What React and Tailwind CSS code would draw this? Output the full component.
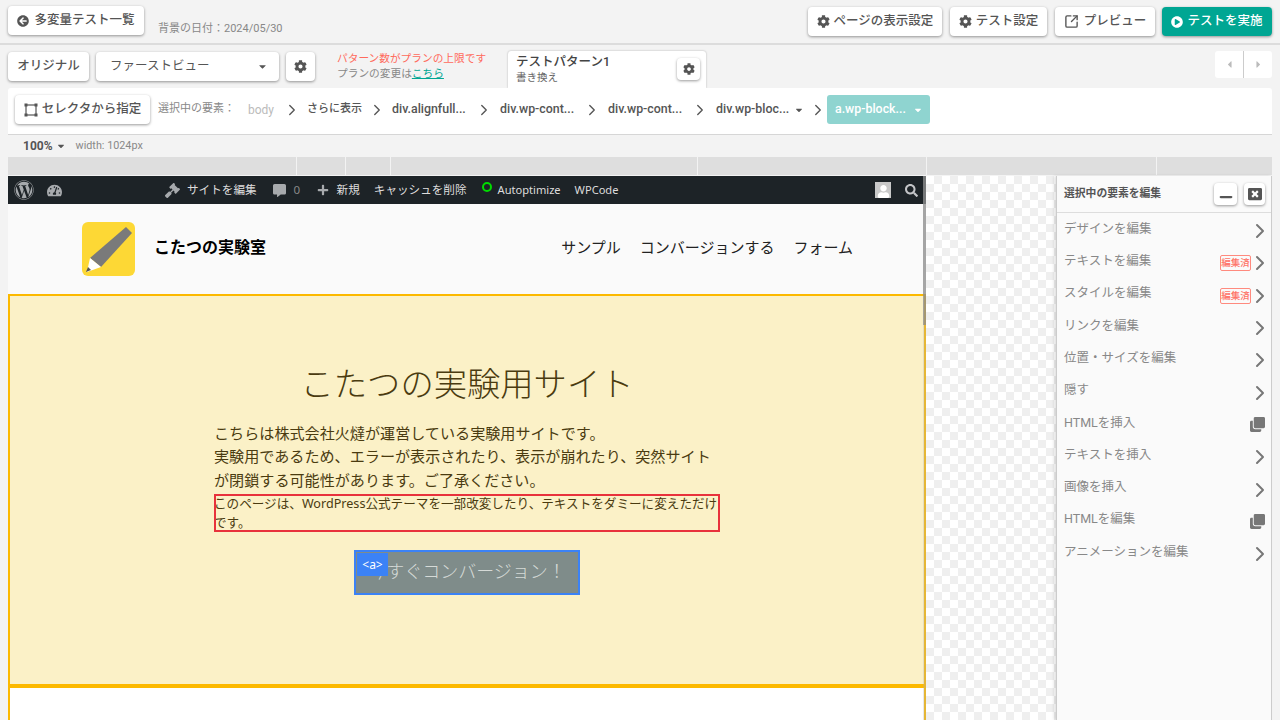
import React from 'react';
import { ChevronRight, Minus, SquareArrowOutUpRight } from 'lucide-react';
import {
  FaArrowCircleLeft,
  FaCaretDown,
  FaCaretLeft,
  FaCaretRight,
  FaClone,
  FaCog,
  FaCommentAlt,
  FaGavel,
  FaPlayCircle,
  FaPlus,
  FaSearch,
  FaTachometerAlt,
  FaUser,
  FaWindowClose,
  FaWordpress,
} from 'react-icons/fa';

const btn = 'flex items-center rounded-[4px] bg-white text-[#555] font-medium shadow-[0_1px_3px_rgba(0,0,0,0.4)]';

const crumbs = [
  { label: 'さらに表示', w: 'w-[54px] text-[11px]', slot: 'w-[31px]' },
  { label: 'div.alignfull...', w: 'w-[75px]', slot: 'w-[33px]' },
  { label: 'div.wp-cont...', w: 'w-[75px]', slot: 'w-[33px]' },
  { label: 'div.wp-cont...', w: 'w-[75px]', slot: 'w-[33px]' },
];

const menu = [
  { label: 'デザインを編集' },
  { label: 'テキストを編集', edited: true },
  { label: 'スタイルを編集', edited: true },
  { label: 'リンクを編集' },
  { label: '位置・サイズを編集' },
  { label: '隠す' },
  { label: 'HTMLを挿入', copy: true },
  { label: 'テキストを挿入' },
  { label: '画像を挿入' },
  { label: 'HTMLを編集', copy: true },
  { label: 'アニメーションを編集' },
];

const Crumb = ({ w }) => (
  <span className={`${w} flex shrink-0 justify-center`}>
    <ChevronRight size={18} strokeWidth={1.8} className="text-[#555]" />
  </span>
);

function TopBar() {
  return (
    <header className="flex h-[45px] shrink-0 items-start justify-between border-b-2 border-[#dcdcdc] px-2 pt-[6px] text-[12.5px]">
      <div className="flex">
        <button className={`${btn} h-[29px] w-[136px] justify-center gap-[5px]`}>
          <FaArrowCircleLeft size={12} />
          多変量テスト一覧
        </button>
        <span className="ml-[14px] mt-[15px] text-[11px] text-[#888]">背景の日付：2024/05/30</span>
      </div>
      <div className="flex gap-2 pt-px">
        <button className={`${btn} h-[29px] w-[134px] justify-center gap-[4px]`}>
          <FaCog size={13} />
          ページの表示設定
        </button>
        <button className={`${btn} h-[29px] w-[97px] justify-center gap-[4px]`}>
          <FaCog size={13} />
          テスト設定
        </button>
        <button className={`${btn} h-[29px] w-[100px] justify-center gap-[5px]`}>
          <SquareArrowOutUpRight size={15} strokeWidth={2.2} />
          プレビュー
        </button>
        <button className="-ml-px flex h-[29px] w-[110px] items-center justify-center gap-[4px] rounded-[4px] bg-[#00a693] font-medium text-white shadow-[0_1px_3px_rgba(0,0,0,0.4)]">
          <FaPlayCircle size={12} />
          テストを実施
        </button>
      </div>
    </header>
  );
}

function PatternRow() {
  return (
    <div className="flex h-[43px] shrink-0 items-start px-2 pt-[6px] text-[12.5px]">
      <button className={`${btn} mt-px h-[29px] w-[81px] justify-center font-bold`}>オリジナル</button>
      <button className={`${btn} ml-[7px] mt-px h-[29px] w-[183px] justify-between pl-[14px] pr-[11px] font-normal`}>
        ファーストビュー
        <FaCaretDown size={11} />
      </button>
      <button className={`${btn} ml-[7px] mt-px h-[29px] w-[29px] justify-center`}>
        <FaCog size={13} />
      </button>
      <div className="ml-[22px] flex w-[170px] shrink-0 flex-col text-[10.7px] leading-[15px]">
        <span className="text-[#ff6a5c]">パターン数がプランの上限です</span>
        <span className="text-[#888]">
          プランの変更は<span className="text-[#00a693] underline">こちら</span>
        </span>
      </div>
      <div className="ml-px flex h-[37px] w-[198px] items-start justify-between rounded-t-[3px] bg-white pl-2 pr-[6px] shadow-[0_0_2px_rgba(0,0,0,0.3)]">
        <div className="flex flex-col">
          <span className="mt-[2px] text-[12.5px] font-medium leading-[17px] text-[#444]">テストパターン1</span>
          <span className="mt-px text-[10.5px] leading-[14px] text-[#666]">書き換え</span>
        </div>
        <button className={`${btn} mt-[7px] h-[22px] w-[23px] justify-center`}>
          <FaCog size={12} />
        </button>
      </div>
      <div className="ml-auto flex h-[27px] w-[57px] rounded-[3px] bg-white text-[#bbb]">
        <span className="flex flex-1 items-center justify-center border-r border-[#ccc]">
          <FaCaretLeft size={11} />
        </span>
        <span className="flex flex-1 items-center justify-center">
          <FaCaretRight size={11} />
        </span>
      </div>
    </div>
  );
}

function SelectorBar() {
  return (
    <div className="mx-2 flex h-[47px] shrink-0 items-start rounded-t-[3px] border-b border-[#d6d6d6] bg-white pl-[7px] pt-[7px]">
      <button className={`${btn} h-[29px] w-[135px] justify-center gap-[4px] text-[12.5px]`}>
        {/* selection frame with corner handles */}
        <svg width="14" height="14" viewBox="0 0 14 14" fill="none">
          <rect x="2" y="2" width="10" height="10" stroke="#555" strokeWidth="1.2" />
          <rect x="0.5" y="0.5" width="3" height="3" fill="#555" />
          <rect x="10.5" y="0.5" width="3" height="3" fill="#555" />
          <rect x="0.5" y="10.5" width="3" height="3" fill="#555" />
          <rect x="10.5" y="10.5" width="3" height="3" fill="#555" />
        </svg>
        セレクタから指定
      </button>
      <div className="flex h-[29px] items-center text-[12.4px] font-medium text-[#555]">
        <span className="ml-2 w-[90px] text-[11px] font-normal text-[#888]">選択中の要素：</span>
        <span className="w-[28px] text-[12px] font-normal text-[#bbb]">body</span>
        <Crumb w="w-[31px]" />
        {crumbs.map((c, i) => (
          <React.Fragment key={i}>
            <span className={`${c.w} whitespace-nowrap`}>{c.label}</span>
            <Crumb w={c.slot} />
          </React.Fragment>
        ))}
        <span className="w-[73px] whitespace-nowrap">div.wp-bloc...</span>
        <FaCaretDown size={10} className="ml-[5px]" />
        <span className="flex w-[23px] justify-end">
          <ChevronRight size={18} strokeWidth={1.8} className="text-[#555]" />
        </span>
        <span className="flex h-[29px] w-[103px] items-center justify-between rounded-[3px] bg-[#8fd4d0] pl-2 pr-[7px] text-white">
          a.wp-block...
          <FaCaretDown size={10} />
        </span>
      </div>
    </div>
  );
}

function Ruler() {
  const widths = ['w-[288px]', 'w-[48px]', 'w-[44px]', 'w-[306px]', 'w-[228px]', 'w-[229px]', 'flex-1'];
  return (
    <div className="mx-2 flex h-[18px] w-[1264px] shrink-0 gap-[1px]">
      {widths.map((w, i) => (
        <div key={i} className={`${w} bg-[#dedede]`} />
      ))}
    </div>
  );
}

function WpBar() {
  return (
    <div className="flex h-[28px] items-center bg-[#1d2327] text-[11.6px] text-[#ddd]">
      <FaWordpress size={20} className="ml-[6px] text-[#a7aaad]" />
      <FaTachometerAlt size={15} className="ml-[13px] text-[#a7aaad]" />
      <FaGavel size={15} className="ml-[103px] text-[#a7aaad]" />
      <span className="ml-[7px]">サイトを編集</span>
      <FaCommentAlt size={13} className="ml-[16px] text-[#a7aaad]" />
      <span className="ml-[8px] w-[7px] text-[#888]">0</span>
      <FaPlus size={12} className="ml-[16px] text-[#a7aaad]" />
      <span className="ml-[8px]">新規</span>
      <span className="ml-[14px]">キャッシュを削除</span>
      <span className="ml-[15px] mb-[7px] h-[10px] w-[10px] rounded-full border-2 border-[#00dc00]" />
      <span className="ml-[6px] text-[11.1px]">Autoptimize</span>
      <span className="ml-[14px] text-[11.1px]">WPCode</span>
      <span className="ml-auto flex h-[16px] w-[16px] items-end justify-center overflow-hidden bg-[#c9c9c9]">
        <FaUser size={13} className="text-white" />
      </span>
      <FaSearch size={13} className="ml-[14px] mr-[8px] text-[#c3c4c7]" />
    </div>
  );
}

function SiteHeader() {
  return (
    <div className="flex h-[90px] items-center justify-between bg-[#fafafa] pl-[74px] pr-[73px]">
      <div className="flex items-center gap-[19px]">
        <div className="h-[54px] w-[53px] rounded-[6px] bg-[#fdd835]">
          {/* pencil mark */}
          <svg width="53" height="54" viewBox="0 0 53 54">
            <polygon points="44,5 50,11 19,45 8,36" fill="#7a7a7a" />
            <polygon points="8,36 19,45 5,50" fill="#ffffff" />
            <polygon points="6,45 9,48 4,50" fill="#555555" />
          </svg>
        </div>
        <span className="mb-[4px] text-[16px] font-bold text-black">こたつの実験室</span>
      </div>
      <nav className="mb-[4px] flex gap-[19px] text-[15px] text-[#222]">
        <span>サンプル</span>
        <span>コンバージョンする</span>
        <span>フォーム</span>
      </nav>
    </div>
  );
}

function Hero() {
  return (
    <section className="flex h-[392px] flex-col items-center border-2 border-[#fcb900] bg-[#fbf1c7] text-[#4a3b10]">
      <h1 className="mt-[63px] text-[33.3px] font-light leading-[48px]">こたつの実験用サイト</h1>
      <div className="mt-[15px] w-[506px]">
        <p className="text-[15.1px] leading-[23.4px]">
          こちらは株式会社火燵が運営している実験用サイトです。
          <br />
          実験用であるため、エラーが表示されたり、表示が崩れたり、突然サイトが閉鎖する可能性があります。ご了承ください。
        </p>
        <p className="mt-[2px] h-[38px] text-[12.6px] leading-[19px] outline-2 -outline-offset-2 outline-[#e8323c]">
          このページは、WordPress公式テーマを一部改変したり、テキストをダミーに変えただけです。
        </p>
      </div>
      <a className="relative mt-[18px] flex h-[45px] w-[226px] items-center justify-center border-2 border-[#3b82f6] bg-[#7f8c8a] pb-[2px] text-[18px] font-light text-[#d5dad7]">
        今すぐコンバージョン！
        <span className="absolute left-[1px] top-[1px] flex h-[23px] w-[31px] items-center justify-center bg-[#3b82f6] text-[12px] font-normal text-white">
          &lt;a&gt;
        </span>
      </a>
    </section>
  );
}

function EditPanel() {
  return (
    <aside className="w-[216px] shrink-0 self-stretch border-x border-[#ccc] bg-[#fafafa] shadow-[-2px_0_3px_rgba(0,0,0,0.12)]">
      <div className="flex h-[37px] items-center justify-between border-b border-[#ddd] pl-[7px] pr-[6px]">
        <span className="text-[10.8px] font-bold text-[#555]">選択中の要素を編集</span>
        <div className="flex gap-[7px]">
          <button className={`${btn} h-[22px] w-[23px] justify-center`}>
            <Minus size={18} strokeWidth={3} className="mt-[6px]" />
          </button>
          <button className={`${btn} h-[22px] w-[21px] justify-center`}>
            <FaWindowClose size={14} />
          </button>
        </div>
      </div>
      <ul className="pt-[2px]">
        {menu.map((m) => (
          <li key={m.label} className="flex h-[32.3px] items-center pl-[7px] pr-px text-[12.5px] text-[#888]">
            <span className="mb-[4px]">{m.label}</span>
            {m.edited && (
              <span className="ml-auto flex h-[16px] w-[31px] items-center justify-center rounded-[2px] border-[1.5px] border-[#ff8a7e] text-[9.5px] font-medium text-[#ff7468]">
                編集済
              </span>
            )}
            {m.copy ? (
              <FaClone size={15} className="ml-auto mr-[5px] text-[#777]" />
            ) : (
              <ChevronRight
                size={24}
                strokeWidth={2}
                className={`${m.edited ? '-ml-[3px]' : 'ml-auto'} -mr-[2px] text-[#777]`}
              />
            )}
          </li>
        ))}
      </ul>
    </aside>
  );
}

export default function App() {
  return (
    <div className="flex h-[720px] w-[1280px] flex-col overflow-hidden bg-[#f3f3f3] [font-family:'Roboto','Noto_Sans_CJK_JP',sans-serif]">
      <TopBar />
      <PatternRow />
      <SelectorBar />
      <div className="flex h-[22px] shrink-0 items-center px-[23px] text-[#555]">
        <span className="text-[12px] font-bold">100%</span>
        <FaCaretDown size={10} className="ml-[3px]" />
        <span className="ml-[10px] text-[10.8px] text-[#888]">width: 1024px</span>
      </div>
      <Ruler />
      <main className="mx-2 mt-px flex min-h-0 flex-1">
        <div className="relative w-[918px] shrink-0 overflow-hidden [font-family:'Noto_Sans','Noto_Sans_CJK_JP',sans-serif]">
          <WpBar />
          <SiteHeader />
          <Hero />
          <div className="h-full border-x-2 border-t-2 border-[#fcb900] bg-white" />
          {/* preview scrollbar */}
          <div className="absolute right-0 top-0 h-full w-[3px] bg-[#b0b0b0]/30">
            <div className="h-[149px] bg-[#8a8a8a]/70" />
          </div>
        </div>
        <div className="w-[130px] shrink-0 bg-[repeating-conic-gradient(#efefef_0_25%,#ffffff_0_50%)] bg-[length:16px_16px]" />
        <EditPanel />
      </main>
    </div>
  );
}
